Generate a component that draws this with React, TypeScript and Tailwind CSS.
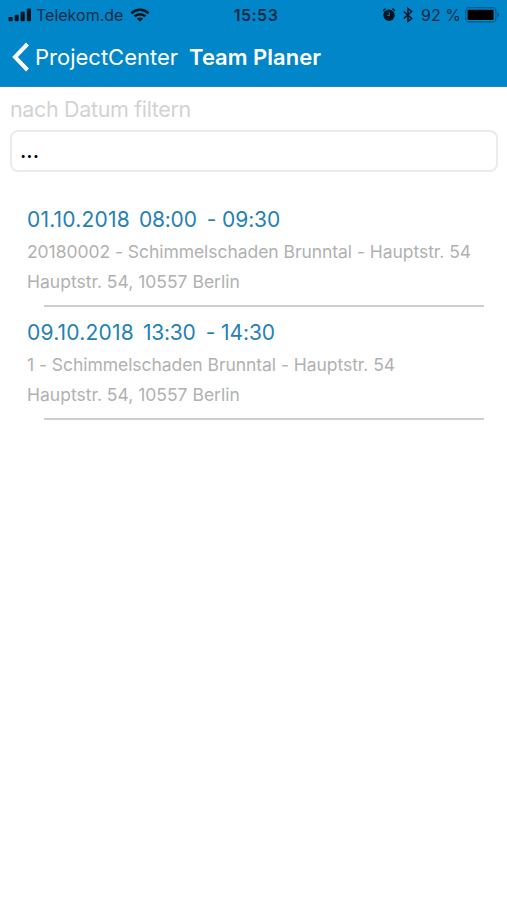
interface Appointment {
  date: string;
  start: string;
  end: string;
  project: string;
  address: string;
}

const appointments: Appointment[] = [
  {
    date: "01.10.2018",
    start: "08:00",
    end: "09:30",
    project: "20180002 - Schimmelschaden Brunntal - Hauptstr. 54",
    address: "Hauptstr. 54, 10557 Berlin",
  },
  {
    date: "09.10.2018",
    start: "13:30",
    end: "14:30",
    project: "1 - Schimmelschaden Brunntal - Hauptstr. 54",
    address: "Hauptstr. 54, 10557 Berlin",
  },
];

function SignalIcon() {
  return (
    <svg width="24" height="14" viewBox="0 0 24 14" fill="currentColor">
      <rect x="0.5" y="9" width="4.2" height="4.3" rx="1" />
      <rect x="6.6" y="6.8" width="4.2" height="6.5" rx="1" />
      <rect x="12.6" y="3.8" width="4.2" height="9.5" rx="1" />
      <rect x="18.8" y="0.6" width="4.2" height="12.7" rx="1" />
    </svg>
  );
}

function WifiIcon() {
  return (
    <svg width="20" height="14" viewBox="0 0 20 14" fill="none" stroke="currentColor" strokeWidth="2.6">
      <path d="M1.4 5.2C6.2 0.6 13.8 0.6 18.6 5.2" />
      <path d="M4.5 8.4C7.6 5.5 12.4 5.5 15.5 8.4" />
      <path d="M6.9 10.7C8.6 9.1 11.4 9.1 13.1 10.7L10 13.7Z" fill="currentColor" stroke="none" />
    </svg>
  );
}

function AlarmIcon() {
  return (
    <svg width="14" height="14" viewBox="0 0 14 14" fill="none" stroke="currentColor">
      <circle cx="7" cy="7.2" r="5.7" fill="currentColor" stroke="none" />
      <path d="M1.2 3.2C1.5 2 2.3 1.2 3.6 1M10.4 1C11.7 1.2 12.5 2 12.8 3.2" strokeWidth="1.3" />
      <path d="M7.3 4.6V7.6H5.2" stroke="#0086c9" strokeWidth="1" />
    </svg>
  );
}

function BluetoothIcon() {
  return (
    <svg width="10" height="16" viewBox="0 0 10 16" fill="none" stroke="currentColor" strokeWidth="1.4">
      <path d="M0.8 4.4L8.7 11.4L5 14.5V1.5L8.7 4.6L0.8 11.6" />
    </svg>
  );
}

function BatteryIcon() {
  return (
    <svg width="35" height="16" viewBox="0 0 35 16">
      <rect x="0.7" y="0.7" width="30.2" height="14.2" rx="3" fill="none" stroke="#0a5480" strokeWidth="1.1" />
      <rect x="2.6" y="2.7" width="26" height="10.2" rx="1" fill="#000" />
      <path d="M32.5 5.3C34.6 6 34.6 9.5 32.5 10.3Z" fill="#0a5480" />
    </svg>
  );
}

function StatusBar() {
  return (
    <div className="grid h-7 grid-cols-[1fr_auto_1fr] items-center pt-px pl-2 pr-[7px] text-base leading-6 text-[#062b43]">
      <div className="flex items-center">
        <span className="text-[#001420]"><SignalIcon /></span>
        <span className="ml-1">Telekom.de</span>
        <span className="ml-[7px] text-[#001420]"><WifiIcon /></span>
      </div>
      <span className="pl-1 font-semibold tracking-[0.5px]">15:53</span>
      <div className="flex items-center justify-end">
        <span className="mr-[7px] text-[#001420]"><AlarmIcon /></span>
        <span className="mr-2 text-[#001420]"><BluetoothIcon /></span>
        <span className="mr-1 whitespace-nowrap">92 %</span>
        <BatteryIcon />
      </div>
    </div>
  );
}

export default function App() {
  return (
    <div className="min-h-screen bg-white font-['Inter',sans-serif]">
      <header className="h-[87px] border-b border-[#2b80ad] bg-[#0086c9]">
        <StatusBar />
        <nav className="flex h-[58px] items-center pl-3 text-[22px] text-white">
          <svg width="18" height="30" viewBox="0 0 18 30" fill="none" stroke="currentColor" strokeWidth="4">
            <path d="M15.5 2L3 15L15.5 28" />
          </svg>
          <button className="ml-[5px]">ProjectCenter</button>
          <h1 className="ml-[11px] font-semibold">Team Planer</h1>
        </nav>
      </header>

      <main>
        <div className="px-2.5 pt-1.5">
          <label htmlFor="date-filter" className="block h-[37px] text-[21.5px] leading-8 tracking-[-0.35px] text-[#d3d3d3]">
            nach Datum filtern
          </label>
          <button
            id="date-filter"
            className="flex h-[42px] w-[488px] items-center rounded-lg border-2 border-[#ebebeb] pl-2 text-left text-[21px] font-medium text-black"
          >
            ...
          </button>
        </div>

        <ul className="pt-[31px] pl-[26px]">
          {appointments.map((a) => (
            <li key={a.date} className="h-[113px]">
              <div className="flex h-[33px] items-center pl-px text-[21px] text-[#2581b5]">
                <span className="tracking-[0.2px]">{a.date}</span>
                <span className="ml-[9px] tracking-[-0.2px]">{a.start}</span>
                <span className="ml-2.5 tracking-[-0.1px]">- {a.end}</span>
              </div>
              <p className="h-[30px] pl-px text-[17.5px] leading-8 tracking-[-0.05px] whitespace-nowrap text-[#b1b1b1]">{a.project}</p>
              <p className="h-[39px] pl-px text-[17.5px] leading-8 text-[#b1b1b1]">{a.address}</p>
              <div className="ml-[18px] h-0.5 w-[440px] bg-[#cfcfcf]" />
            </li>
          ))}
        </ul>
      </main>
    </div>
  );
}
